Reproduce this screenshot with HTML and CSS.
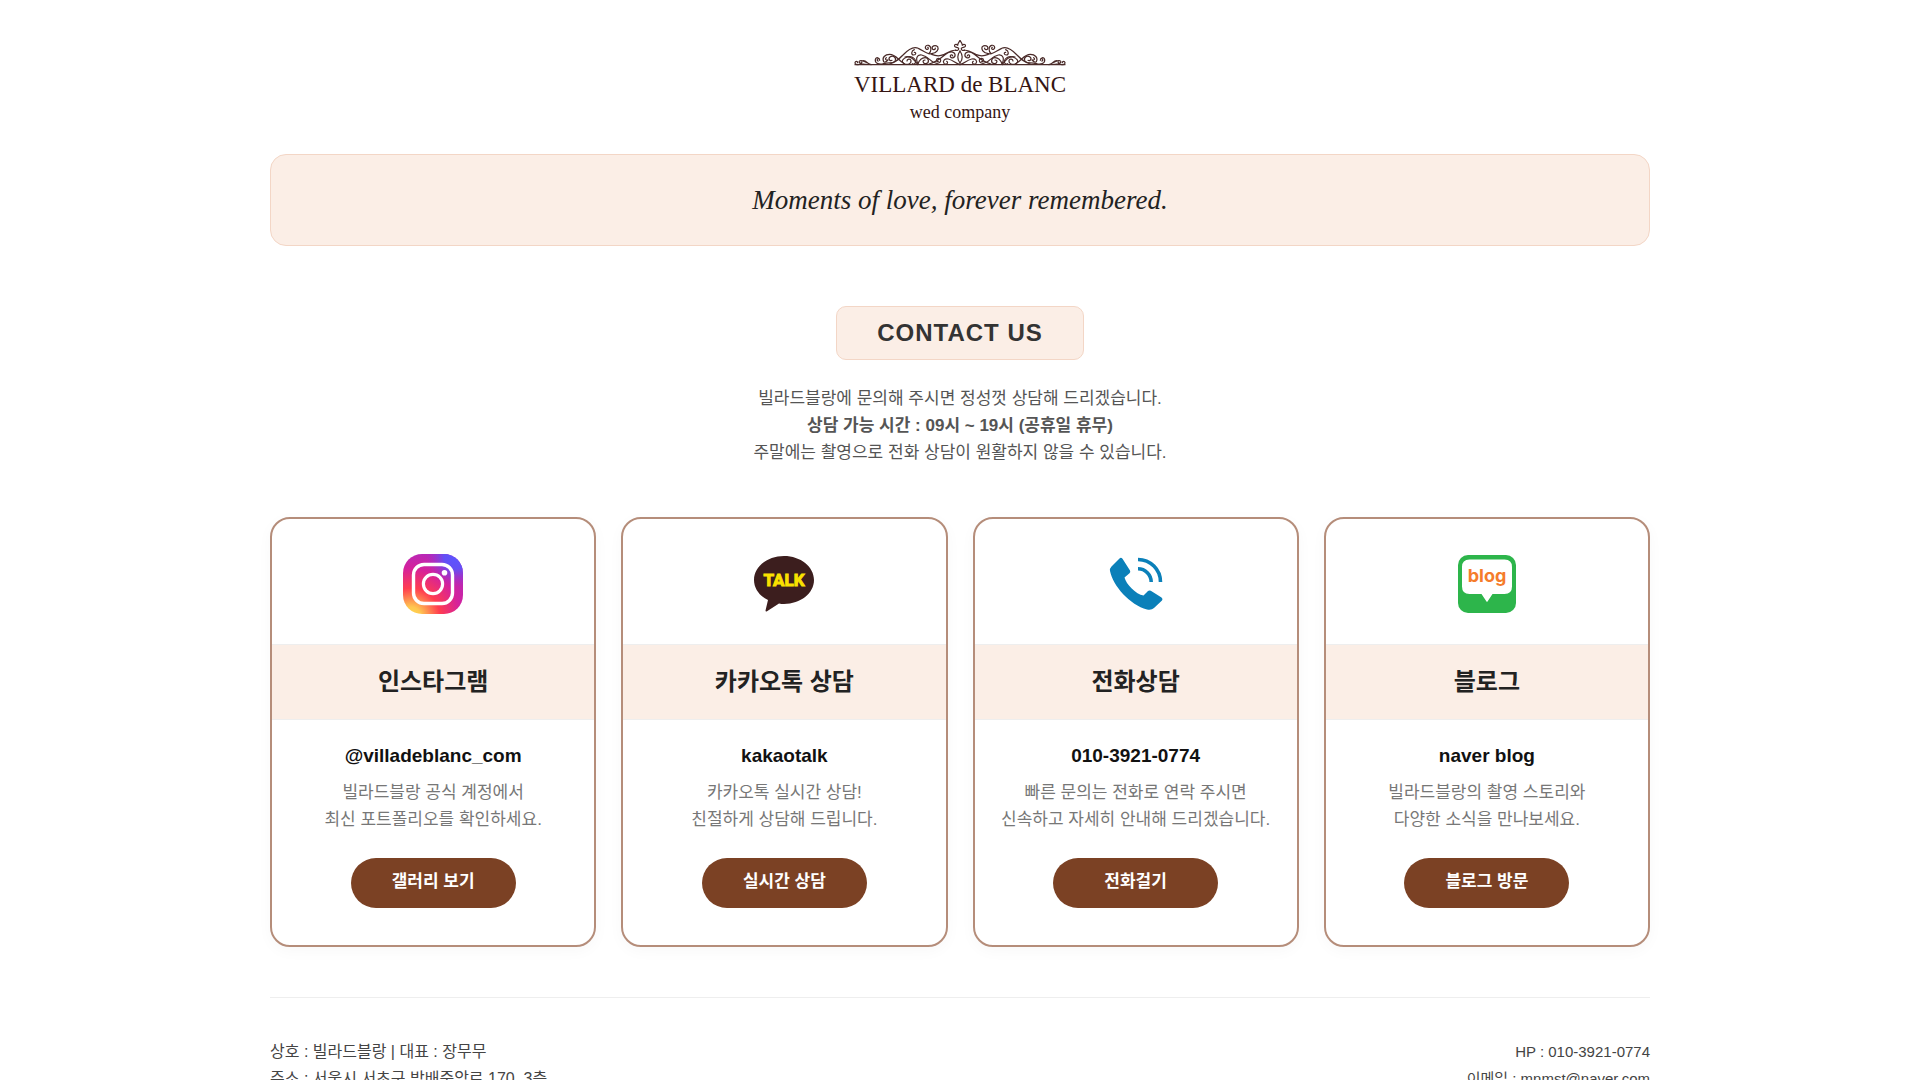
FILE: index.html
```html
<!DOCTYPE html>
<html lang="ko">
<head>
    <meta charset="UTF-8">
    <meta name="viewport" content="width=device-width, initial-scale=1">
    <title>VILLARD de BLANC - CONTACT US</title>
    <link rel="stylesheet" href="styles.css">
</head>
<body>
<div class="container">
    <header class="header">
        <a href="#" class="logo" aria-label="VILLARD de BLANC wed company">
            <svg class="ornament" viewBox="40 20 642 90" aria-hidden="true">
                <defs>
                    <g id="scroll">
                        <path d="M94 103C84 99 76 92 66 91C60 90 56 94 60 97C64 100 68 97 66 95M80 102C70 102 66 98 58 102C52 104 46 102 46 97C47 92 54 92 54 97M70 91C78 90 82 97 90 102"/>
                        <path d="M120 90C120 82 109 78 107 88C105 100 120 104 132 100C152 96 160 100 166 92C172 82 160 74 152 79C144 84 150 94 157 90M116 92C111 92 112 84 117 85"/>
                        <path d="M132 94C126 82 136 72 150 72C170 72 174 90 194 100M132 94C138 98 142 92 146 88C140 92 134 86 140 82"/>
                        <path d="M150 101C166 98 176 88 190 74C205 58 220 46 236 54C250 60 262 74 276 70C292 68 298 56 294 49C286 42 275 48 278 55C280 60 288 58 287 53"/>
                        <path d="M268 70C276 62 276 48 266 45C257 43 254 54 261 57C266 58 268 53 264 51"/>
                        <path d="M202 92C202 86 212 84 214 91C215 101 203 105 194 100C182 94 190 84 202 80C216 76 226 84 228 92C229 100 222 103 218 100"/>
                        <path d="M196 80C212 74 224 88 234 102C238 92 244 82 256 82C268 82 270 98 259 100C249 101 247 89 256 89"/>
                        <path d="M224 58C214 62 214 73 222 74C230 74 230 65 224 66M236 102C226 84 232 72 246 74C268 78 274 98 292 99C306 98 306 84 296 84C288 85 289 95 296 93"/>
                        <path d="M276 72C290 78 300 78 312 73C324 67 336 58 348 60M268 101C286 98 306 82 318 72C330 62 342 62 346 72C348 82 336 86 332 79C331 73 338 72 339 77"/>
                        <path d="M361 98C350 84 354 72 361 62M361 103C346 98 342 90 326 86C314 84 308 93 313 99C320 105 328 97 321 93"/>
                        <path d="M361 31C356 39 352 41 355 46C350 40 343 42 345 48C348 52 354 50 357 54C358 60 352 62 348 59"/>
                    </g>
                </defs>
                <g fill="none" stroke="#4a2b29" stroke-width="3.600" stroke-linecap="round">
                    <use href="#scroll"/>
                    <use href="#scroll" transform="translate(722 0) scale(-1 1)"/>
                    <path d="M46 103H676"/>
                </g>
            </svg>
            <span class="logo-name">VILLARD de BLANC</span>
            <span class="logo-sub">wed company</span>
        </a>
    </header>

    <section class="banner">
        <p>Moments of love, forever remembered.</p>
    </section>

    <main>
        <section class="intro">
            <h1 class="intro-title">CONTACT US</h1>
            <p class="intro-text">
                빌라드블랑에 문의해 주시면 정성껏 상담해 드리겠습니다.<br>
                <strong>상담 가능 시간 : 09시 ~ 19시 (공휴일 휴무)</strong><br>
                주말에는 촬영으로 전화 상담이 원활하지 않을 수 있습니다.
            </p>
        </section>

        <section class="cards">
            <article class="card">
                <div class="card-icon">
                    <svg viewBox="0 0 60 60" aria-hidden="true">
                        <defs>
                            <radialGradient id="insta" gradientUnits="userSpaceOnUse" cx="8" cy="63" r="72">
                                <stop offset="0" stop-color="#ffdc4e"/>
                                <stop offset=".14" stop-color="#ffc750"/>
                                <stop offset=".4" stop-color="#ff3d50"/>
                                <stop offset=".68" stop-color="#d5219c"/>
                                <stop offset="1" stop-color="#a92bc4"/>
                            </radialGradient>
                            <radialGradient id="instaBlue" gradientUnits="userSpaceOnUse" cx="53" cy="3" r="30">
                                <stop offset="0" stop-color="#5b55ff"/>
                                <stop offset=".4" stop-color="#6350f5"/>
                                <stop offset="1" stop-color="#a92bc4" stop-opacity="0"/>
                            </radialGradient>
                        </defs>
                        <rect width="60" height="60" rx="19" fill="url(#insta)"/>
                        <rect width="60" height="60" rx="19" fill="url(#instaBlue)"/>
                        <rect x="10.5" y="10.5" width="39" height="39" rx="10.5" fill="none" stroke="#fff" stroke-width="3.4"/>
                        <circle cx="30" cy="30" r="9.6" fill="none" stroke="#fff" stroke-width="3.2"/>
                        <circle cx="41.5" cy="18.7" r="2.8" fill="#fff"/>
                    </svg>
                </div>
                <h2 class="card-title">인스타그램</h2>
                <div class="card-body">
                    <p class="card-name">@villadeblanc_com</p>
                    <p class="card-desc">빌라드블랑 공식 계정에서<br>최신 포트폴리오를 확인하세요.</p>
                    <a href="#" class="btn">갤러리 보기</a>
                </div>
            </article>

            <article class="card">
                <div class="card-icon">
                    <svg viewBox="0 0 60 60" aria-hidden="true">
                        <path d="M30 2C13.400 2 0 12.600 0 26C0 34.500 5.500 42 14 46L11.500 56.500Q11.600 58 13 57.200L25 49.400Q27.500 49.900 30 49.900C46.600 49.900 60 39.300 60 26S46.600 2 30 2Z" fill="#3c1e1e"/>
                        <text class="talk-text" x="30" y="32" text-anchor="middle">TALK</text>
                    </svg>
                </div>
                <h2 class="card-title">카카오톡 상담</h2>
                <div class="card-body">
                    <p class="card-name">kakaotalk</p>
                    <p class="card-desc">카카오톡 실시간 상담!<br>친절하게 상담해 드립니다.</p>
                    <a href="#" class="btn">실시간 상담</a>
                </div>
            </article>

            <article class="card">
                <div class="card-icon">
                    <svg viewBox="0 0 60 60" aria-hidden="true">
                        <path d="M13.500 4.500Q15 3 16.500 4.800L24 16.500Q24.800 18 23.500 19.200L18.500 23.500C20 30 30 40.500 37.500 41.500L42 37Q43.300 35.900 44.800 36.800L55.500 43.500Q57.300 44.800 56 46.500L48 54Q45.500 56.500 41 55.500C24 51 7 32 4 17Q3.500 14.500 5.500 12.500Z" fill="#0b80b9"/>
                        <path d="M32 5.500A22.500 22.500 0 0 1 54.500 28M32 14.800A13.200 13.200 0 0 1 45.200 28" fill="none" stroke="#0b80b9" stroke-width="3.600"/>
                    </svg>
                </div>
                <h2 class="card-title">전화상담</h2>
                <div class="card-body">
                    <p class="card-name">010-3921-0774</p>
                    <p class="card-desc">빠른 문의는 전화로 연락 주시면<br>신속하고 자세히 안내해 드리겠습니다.</p>
                    <a href="#" class="btn">전화걸기</a>
                </div>
            </article>

            <article class="card">
                <div class="card-icon">
                    <svg viewBox="0 0 60 60" aria-hidden="true">
                        <rect x="1" y="1" width="58" height="58" rx="10" fill="#2db54b"/>
                        <path d="M12.500 5.500H47.500Q55 5.500 55 13V32.500Q55 40 47.500 40H35.500L30.500 47.500Q30 48.300 29.500 47.500L24.500 40H12.500Q5 40 5 32.500V13Q5 5.500 12.500 5.500Z" fill="#fff"/>
                        <text class="blog-text" x="30" y="28" text-anchor="middle">blog</text>
                    </svg>
                </div>
                <h2 class="card-title">블로그</h2>
                <div class="card-body">
                    <p class="card-name">naver blog</p>
                    <p class="card-desc">빌라드블랑의 촬영 스토리와<br>다양한 소식을 만나보세요.</p>
                    <a href="#" class="btn">블로그 방문</a>
                </div>
            </article>
        </section>
    </main>

    <footer class="footer">
        <div>
            <p>상호 : 빌라드블랑 | 대표 : 장무무</p>
            <p>주소 : 서울시 서초구 방배중앙로 170, 3층</p>
        </div>
        <div class="footer-right">
            <p>HP : 010-3921-0774</p>
            <p>이메일 : mnmst@naver.com</p>
        </div>
    </footer>
</div>
</body>
</html>
```
FILE: styles.css
```css
*{
    margin: 0;
    padding: 0;
    box-sizing: border-box;
}
body{
    font-family: "Liberation Sans", "Noto Sans CJK KR", sans-serif;
    font-size: 17px;
    line-height: 27px;
    color: #333;
    background: #fff;
}
a{
    color: inherit;
    text-decoration: none;
}
.container{
    max-width: 1420px;
    margin: 0 auto;
    padding: 0 20px;
}

/* 로고 */
.header{
    display: flex;
    justify-content: center;
    padding: 37px 0 32px;
}
.logo{
    display: flex;
    flex-direction: column;
    align-items: center;
    font-family: "Liberation Serif", serif;
    color: #351513;
}
.ornament{
    width: 214px;
    height: 30px;
}
.logo-name{
    font-size: 23px;
    line-height: 35px;
}
.logo-sub{
    font-size: 18px;
    line-height: 20px;
}

/* 배너 */
.banner{
    padding: 28px 20px;
    border: 1px solid #f3d6c6;
    border-radius: 16px;
    background: #fbeee6;
    text-align: center;
}
.banner p{
    font-family: "Liberation Serif", serif;
    font-size: 27px;
    font-style: italic;
    line-height: 34px;
    color: #222;
}

/* 안내 */
.intro{
    padding: 60px 0 51px;
    text-align: center;
}
.intro-title{
    display: inline-block;
    padding: 12px 40px;
    border: 1px solid #f3d6c6;
    border-radius: 10px;
    background: #fbeee6;
    font-size: 24px;
    line-height: 28px;
    letter-spacing: 1px;
    vertical-align: top;
}
.intro-text{
    margin-top: 25px;
    color: #555;
}

/* 연락처 카드 */
.cards{
    display: grid;
    grid-template-columns: repeat(4, 1fr);
    gap: 25px;
}
.card{
    border: 2px solid #b58d7a;
    border-radius: 20px;
    background: #fff;
    box-shadow: 0 4px 15px rgba(0, 0, 0, 0.03);
    text-align: center;
    overflow: hidden;
}
.card-icon{
    padding: 35px 0 30px;
}
.card-icon svg{
    display: block;
    width: 60px;
    height: 60px;
    margin: 0 auto;
}
.talk-text{
    font: bold 17px Roboto, sans-serif;
    fill: #fae100;
    stroke: #fae100;
    stroke-width: 1;
}
.blog-text{
    font: bold 18px Inter, sans-serif;
    fill: #f57c2b;
}
.card-title{
    padding: 20px 10px;
    border-top: 1px solid #eee;
    border-bottom: 1px solid #eee;
    background: #fbeee6;
    font-size: 24px;
    line-height: 34px;
    color: #222;
}
.card-body{
    padding: 20px 20px 37px;
}
.card-name{
    font-size: 19px;
    font-weight: bold;
    line-height: 32px;
    color: #111;
}
.card-desc{
    margin: 7px 0 25px;
    color: #777;
}
.btn{
    display: inline-block;
    min-width: 165px;
    padding: 10px 40px 13px;
    border-radius: 25px;
    background: #7b4124;
    font-weight: bold;
    color: #fff;
    vertical-align: top;
}

/* 푸터 */
.footer{
    display: flex;
    justify-content: space-between;
    margin-top: 50px;
    padding: 40px 0;
    border-top: 1px solid #eee;
    font-size: 16px;
    color: #444;
}
.footer-right{
    font-size: 15px;
    text-align: right;
}

@media (max-width: 1100px){
    .cards{
        grid-template-columns: repeat(2, 1fr);
    }
}
@media (max-width: 600px){
    .cards{
        grid-template-columns: 1fr;
    }
}
```
